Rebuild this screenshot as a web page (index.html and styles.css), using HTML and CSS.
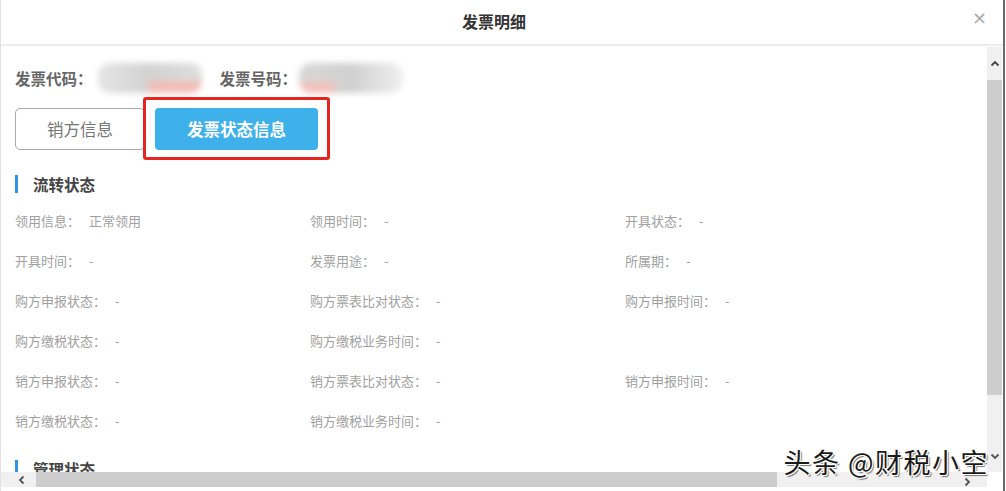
FILE: index.html
```html
<!DOCTYPE html>
<html lang="zh-CN">
<head>
    <meta charset="UTF-8">
    <title>发票明细</title>
    <link rel="stylesheet" href="styles.css">
</head>
<body>
    <div class="modal">
        <div class="modal-header">
            <span class="modal-title">发票明细</span>
            <span class="close-btn">&times;</span>
        </div>

        <div class="modal-body">
            <div class="body-left">
                <div class="content">
                    <div class="invoice-line">
                        <span class="invoice-label">发票代码：</span>
                        <span class="blur-value blur-code"></span>
                        <span class="invoice-label label-gap">发票号码：</span>
                        <span class="blur-value blur-number"></span>
                    </div>

                    <div class="tabs">
                        <button class="tab-btn">销方信息</button>
                        <button class="tab-btn active">发票状态信息</button>
                    </div>

                    <div class="section-title">流转状态</div>
                    <div class="info-grid">
                        <div class="info-item">领用信息：<span class="val">正常领用</span></div>
                        <div class="info-item">领用时间：<span class="val">-</span></div>
                        <div class="info-item">开具状态：<span class="val">-</span></div>

                        <div class="info-item">开具时间：<span class="val">-</span></div>
                        <div class="info-item">发票用途：<span class="val">-</span></div>
                        <div class="info-item">所属期：<span class="val">-</span></div>

                        <div class="info-item">购方申报状态：<span class="val">-</span></div>
                        <div class="info-item">购方票表比对状态：<span class="val">-</span></div>
                        <div class="info-item">购方申报时间：<span class="val">-</span></div>

                        <div class="info-item">购方缴税状态：<span class="val">-</span></div>
                        <div class="info-item">购方缴税业务时间：<span class="val">-</span></div>
                        <div class="info-item"></div>

                        <div class="info-item">销方申报状态：<span class="val">-</span></div>
                        <div class="info-item">销方票表比对状态：<span class="val">-</span></div>
                        <div class="info-item">销方申报时间：<span class="val">-</span></div>

                        <div class="info-item">销方缴税状态：<span class="val">-</span></div>
                        <div class="info-item">销方缴税业务时间：<span class="val">-</span></div>
                        <div class="info-item"></div>
                    </div>

                    <div class="section-title next-section">管理状态</div>
                </div>

                <!-- horizontal scrollbar -->
                <div class="hscroll">
                    <span class="scroll-arrow">
                        <svg width="10" height="10" viewBox="0 0 10 10"><path d="M6.5 1.5 L3 5 L6.5 8.5" fill="none" stroke="#555" stroke-width="1.8"/></svg>
                    </span>
                    <span class="hscroll-thumb"></span>
                    <span class="hscroll-rest"></span>
                    <span class="scroll-arrow">
                        <svg width="10" height="10" viewBox="0 0 10 10"><path d="M3.5 1.5 L7 5 L3.5 8.5" fill="none" stroke="#555" stroke-width="1.8"/></svg>
                    </span>
                </div>
            </div>

            <!-- vertical scrollbar -->
            <div class="vscroll">
                <span class="scroll-arrow v-arrow">
                    <svg width="10" height="10" viewBox="0 0 10 10"><path d="M1.5 6.5 L5 3 L8.5 6.5" fill="none" stroke="#444" stroke-width="1.8"/></svg>
                </span>
                <span class="vscroll-thumb"></span>
                <span class="vscroll-rest"></span>
                <span class="scroll-arrow v-arrow">
                    <svg width="10" height="10" viewBox="0 0 10 10"><path d="M1.5 3.5 L5 7 L8.5 3.5" fill="none" stroke="#555" stroke-width="1.8"/></svg>
                </span>
            </div>
        </div>

        <div class="watermark">头条 @财税小空</div>
    </div>
</body>
</html>
```

FILE: styles.css
```css
/* Base styles */
* {
    margin: 0;
    padding: 0;
    box-sizing: border-box;
    font-family: "Noto Sans CJK SC", "Noto Sans", sans-serif;
}

body {
    background-color: #fff;
    width: 1006px;
    height: 491px;
    overflow: hidden;
}

/* Modal frame */
.modal {
    position: relative;
    width: 1005px;
    height: 491px;
    border-left: 1px solid #e2e2e2;
    border-right: 2px solid #6a6a6a;
    display: flex;
    flex-direction: column;
}

.modal-header {
    height: 46px;
    flex-shrink: 0;
    display: flex;
    align-items: center;
    justify-content: center;
    padding-right: 16px;
    border-bottom: 2px solid #ededed;
    position: relative;
}

.modal-title {
    font-size: 16px;
    font-weight: 700;
    color: #333;
    margin-top: -3px;
}

.close-btn {
    position: absolute;
    right: 16px;
    top: 7px;
    font-size: 18px;
    color: #aaa;
    font-family: "DejaVu Sans", sans-serif;
}

.modal-body {
    flex: 1;
    display: flex;
    min-height: 0;
}

.body-left {
    flex: 1;
    display: flex;
    flex-direction: column;
    padding-bottom: 4px;
    min-width: 0;
}

.content {
    flex: 1;
    overflow: hidden;
    padding: 18px 0 0 14px;
}

/* Invoice code line */
.invoice-line {
    display: flex;
    align-items: center;
    height: 28px;
}

.invoice-label {
    font-size: 15.5px;
    font-weight: 700;
    color: #666;
}

.label-gap {
    margin-left: 18px;
}

.blur-value {
    display: inline-block;
    height: 30px;
    filter: blur(3px);
    border-radius: 12px;
}

.blur-code {
    width: 104px;
    margin-left: 5px;
    background:
        linear-gradient(to bottom, transparent 60%, #f1bdb7 60%) 50px 0 / 54px 100% no-repeat,
        linear-gradient(to right, #e4e4e4, #d2d2d2 50%, #dedede);
}

.blur-number {
    width: 104px;
    margin-left: 2px;
    background:
        linear-gradient(to bottom, transparent 62%, #f2c0ba 62%) 0 0 / 36px 100% no-repeat,
        linear-gradient(to right, #d8d8d8, #d0d0d0 50%, #efefef);
}

/* Tabs */
.tabs {
    display: flex;
    gap: 10px;
    margin-top: 16px;
}

.tab-btn {
    height: 42px;
    width: 130px;
    border: 1px solid #a8a8a8;
    border-radius: 5px;
    background: #fff;
    color: #777;
    font-size: 16.5px;
}

.tab-btn.active {
    position: relative;
    width: 163px;
    border: none;
    border-radius: 4px;
    background: #3eb0ea;
    color: #fff;
    font-weight: 700;
}

/* red annotation box drawn over the active tab */
.tab-btn.active::after {
    content: "";
    position: absolute;
    top: -11px;
    bottom: -10px;
    left: -12px;
    right: -12px;
    border: 3px solid #e62521;
    border-radius: 3px;
}

/* Sections */
.section-title {
    margin-top: 25px;
    border-left: 3px solid #2f93e8;
    padding-left: 15px;
    line-height: 18px;
    font-size: 15.5px;
    font-weight: 700;
    color: #444;
}

.next-section {
    margin-top: 22px;
}

.info-grid {
    display: grid;
    grid-template-columns: 295px 315px 1fr;
    margin-top: 5px;
}

.info-item {
    height: 40px;
    line-height: 40px;
    padding-top: 3px;
    font-size: 13px;
    color: #a0a0a0;
}

.val {
    margin-left: 9px;
}

/* Fake scrollbars */
.hscroll {
    height: 15px;
    display: flex;
    align-items: center;
    background: #f0f0f0;
}

.scroll-arrow {
    width: 15px;
    height: 15px;
    display: flex;
    align-items: center;
    justify-content: center;
    flex-shrink: 0;
}

.hscroll .scroll-arrow:first-child {
    width: 35px;
    padding-left: 6px;
}

.hscroll .scroll-arrow:last-child {
    width: 30px;
    padding-right: 10px;
    padding-top: 4px;
}

.hscroll-thumb {
    width: 741px;
    height: 15px;
    background: #cdcdcd;
}

.hscroll-rest {
    flex: 1;
}

.vscroll {
    width: 15px;
    margin: 1px 1px 19px 0;
    display: flex;
    flex-direction: column;
    background: #f0f0f0;
}

.v-arrow {
    height: 33px;
}

.vscroll-thumb {
    height: 315px;
    background: #cdcdcd;
}

.vscroll-rest {
    flex: 1;
}

/* Watermark */
.watermark {
    position: absolute;
    right: 14px;
    bottom: 14px;
    font-size: 27px;
    line-height: 30px;
    color: #1a1a1a;
    letter-spacing: 1.5px;
    text-shadow: 1px 1px 0 #fff, -1px -1px 0 #fff, 1px -1px 0 #fff, -1px 1px 0 #fff, 2px 2px 1px #777;
}
```
